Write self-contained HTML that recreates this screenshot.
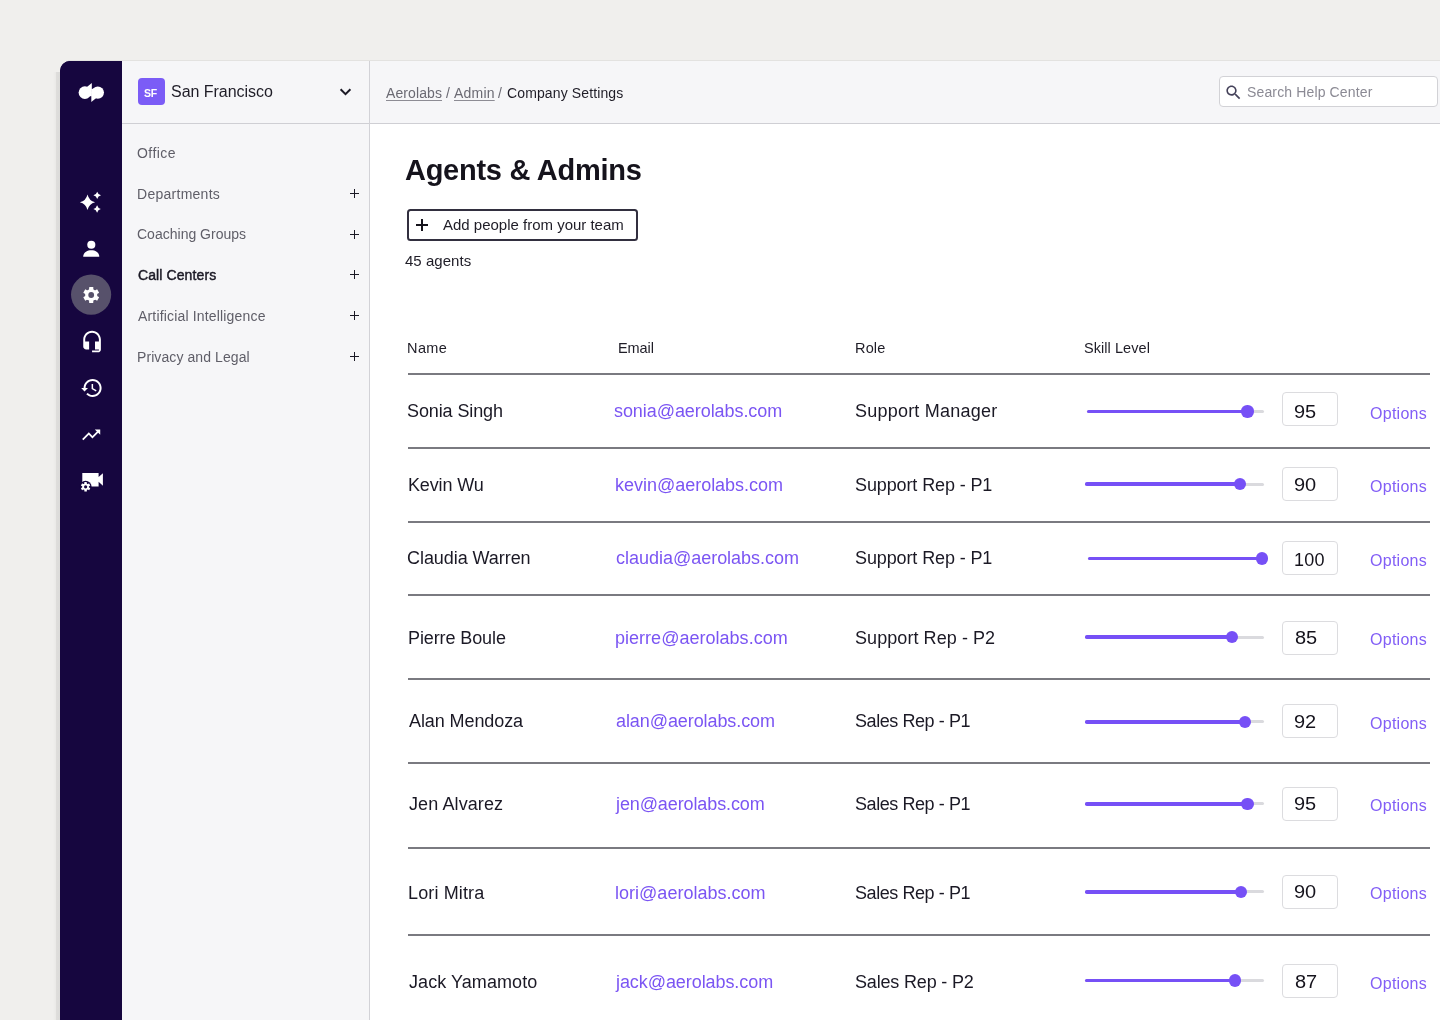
<!DOCTYPE html>
<html><head><meta charset="utf-8">
<style>
*{margin:0;padding:0;box-sizing:border-box}
html,body{width:1440px;height:1020px;overflow:hidden}
body{background:#f0efed;font-family:"Liberation Sans",sans-serif;position:relative;color:#1b1925}
.abs{position:absolute}
.t{position:absolute;white-space:nowrap;line-height:1;will-change:transform}
u{text-decoration:underline;text-underline-offset:2px;text-decoration-thickness:1px;text-decoration-color:#8d8c94}
#app{position:absolute;left:60px;top:61px;width:1380px;height:959px;border-top-left-radius:10px;background:#16063f;}
#rail{position:absolute;left:60px;top:61px;width:62px;height:959px;background:#16063f;border-top-left-radius:10px}
#sub{position:absolute;left:122px;top:61px;width:248px;height:959px;background:#f6f6f8}
#vdiv{position:absolute;left:369px;top:61px;width:1px;height:959px;background:#d2d2d7}
#shadow{position:absolute;left:53px;top:72px;width:7px;height:948px;background:linear-gradient(to right,rgba(0,0,0,0),rgba(0,0,0,.025) 40%,rgba(0,0,0,.075) 45%,rgba(0,0,0,.085))}
#topsh{position:absolute;left:68px;top:60px;width:1372px;height:1px;background:rgba(0,0,0,.05)}
#hdr{position:absolute;left:122px;top:61px;width:1318px;height:63px;background:#f6f6f8;border-bottom:1px solid #cfcfd4}
#main{position:absolute;left:370px;top:124px;width:1070px;height:896px;background:#fff}
.plus{position:absolute;width:9px;height:9px}
.plus:before{content:"";position:absolute;left:0;top:3.7px;width:9px;height:1.6px;background:#1b1925}
.plus:after{content:"";position:absolute;left:3.7px;top:0;width:1.6px;height:9px;background:#1b1925}
.line{position:absolute;left:408px;width:1022px;height:2px;background:#7a7a80}
</style></head><body>
<div id="app"></div><div id="rail"></div><div id="sub"></div><div id="hdr"></div><div id="main"></div><div id="vdiv"></div><div id="shadow"></div><div id="topsh"></div>
<svg class="abs" style="left:0;top:0" width="1440" height="1020" viewBox="0 0 1440 1020"><g fill="#fff"><circle cx="84.9" cy="92.6" r="6.3"/><path d="M86.6 87.2 L91.8 82.9 L91.8 96.2 L85 96Z"/><circle cx="97.8" cy="92.6" r="6.2"/><path d="M96.2 98 L91.3 101.9 L91.3 89 L97 89Z"/></g><g fill="#fff"><path d="M87.5 194.39999999999998 Q89.0 200.7 95.1 202.2 Q89.0 203.7 87.5 210.0 Q86.0 203.7 79.9 202.2 Q86.0 200.7 87.5 194.39999999999998Z"/><path d="M97.2 191.65 Q98.0 194.54999999999998 101.0 195.35 Q98.0 196.15 97.2 199.04999999999998 Q96.4 196.15 93.4 195.35 Q96.4 194.54999999999998 97.2 191.65Z"/><path d="M97.1 205.15 Q97.89999999999999 208.1 100.8 208.9 Q97.89999999999999 209.70000000000002 97.1 212.65 Q96.3 209.70000000000002 93.39999999999999 208.9 Q96.3 208.1 97.1 205.15Z"/></g><g fill="#fff"><circle cx="91.3" cy="244.8" r="4.05"/><path d="M83.2 256.8 C83.2 252.2 87.2 250.2 91.3 250.2 C95.4 250.2 99.3 252.2 99.3 256.8Z"/></g><circle cx="91.1" cy="294.6" r="20.1" fill="#57516b"/><g transform="translate(91.2,295)" fill="#fff"><circle r="6.1"/><rect x="-2.1" y="-8" width="4.2" height="16" rx="0.4" transform="rotate(0)"/><rect x="-2.1" y="-8" width="4.2" height="16" rx="0.4" transform="rotate(60)"/><rect x="-2.1" y="-8" width="4.2" height="16" rx="0.4" transform="rotate(120)"/><circle r="2.9" fill="#57516b"/></g><g transform="translate(80.3,329.6) scale(0.98)" fill="#fff"><path d="M12 1.2c-4.97 0-9 4.03-9 9v7c0 1.66 1.34 3 3 3h3v-8H5v-2c0-3.870 3.13-7 7-7s7 3.13 7 7v2h-4v8h4v1h-7v2h6c1.66 0 3-1.34 3-3V10.2c0-4.97-4.03-9-9-9z"/></g><g transform="translate(79.6,376)" fill="#fff"><path d="M13 3c-4.97 0-9 4.03-9 9H1.6l3.3 3.6L8.4 12H6c0-3.87 3.13-7 7-7s7 3.13 7 7-3.13 7-7 7c-1.93 0-3.68-.79-4.940-2.06l-1.42 1.42C8.27 19.99 10.51 21 13 21c4.97 0 9-4.03 9-9s-4.03-9-9-9zm-1 5v5l4.28 2.54.72-1.21-3.5-2.08V8H12z"/></g><g transform="translate(80.3,424.0) scale(0.906)" fill="#fff"><path d="M16 6l2.29 2.29-4.88 4.88-4-4L2 16.59 3.41 18l6-6 4 4 6.3-6.29L22 12V6z"/></g><path fill="#fff" d="M82.3 473 H98.6 V477 L102.9 473.3 V485.8 L98.6 481.7 V486.6 H82.3Z"/><circle cx="85.6" cy="486.8" r="6.0" fill="#16063f"/><g transform="translate(85.6,486.8)" fill="#fff"><circle r="3.3"/><rect x="-1.25" y="-4.75" width="2.5" height="9.5" rx="0.4" transform="rotate(0)"/><rect x="-1.25" y="-4.75" width="2.5" height="9.5" rx="0.4" transform="rotate(60)"/><rect x="-1.25" y="-4.75" width="2.5" height="9.5" rx="0.4" transform="rotate(120)"/><circle r="1.6" fill="#16063f"/></g></svg>
<div class="abs" style="left:138px;top:78px;width:27px;height:27px;border-radius:4px;background:#7b5cf6"></div>
<div class="t" style="left:144.11px;top:87.71px;font-size:10.5px;color:#fff;font-weight:bold;letter-spacing:-0.200px;">SF</div>
<div class="t" style="left:170.58px;top:83.96px;font-size:16px;color:#1f1d27;font-weight:normal;letter-spacing:-0.035px;">San Francisco</div>
<svg class="abs" style="left:330px;top:80px" width="30" height="25" viewBox="330 80 30 25"><polyline points="340.6,89.3 345.5,94.2 350.4,89.3" fill="none" stroke="#1b1925" stroke-width="2"/></svg>
<div class="t" style="left:137.49px;top:145.95px;font-size:14px;color:#5f5e68;font-weight:normal;letter-spacing:0.458px;">Office</div>
<div class="t" style="left:137.02px;top:186.65px;font-size:14px;color:#5f5e68;font-weight:normal;letter-spacing:0.269px;">Departments</div>
<div class="plus" style="left:350px;top:189px"></div>
<div class="t" style="left:137.44px;top:227.35px;font-size:14px;color:#5f5e68;font-weight:normal;letter-spacing:0.008px;">Coaching Groups</div>
<div class="plus" style="left:350px;top:230px"></div>
<div class="t" style="left:137.84px;top:267.85px;font-size:14px;color:#1b1925;font-weight:normal;letter-spacing:0.101px;-webkit-text-stroke:0.45px #1b1925;">Call Centers</div>
<div class="plus" style="left:350px;top:270px"></div>
<div class="t" style="left:137.95px;top:309.05px;font-size:14px;color:#5f5e68;font-weight:normal;letter-spacing:0.169px;">Artificial Intelligence</div>
<div class="plus" style="left:350px;top:311px"></div>
<div class="t" style="left:137.02px;top:349.55px;font-size:14px;color:#5f5e68;font-weight:normal;letter-spacing:0.085px;">Privacy and Legal</div>
<div class="plus" style="left:350px;top:352px"></div>
<div class="t" style="left:385.55px;top:86.05px;font-size:14px;color:#6b6a73;font-weight:normal;letter-spacing:0.094px;"><u>Aerolabs</u></div>
<div class="t" style="left:446.35px;top:86.05px;font-size:14px;color:#6b6a73;font-weight:normal;letter-spacing:0.000px;">/</div>
<div class="t" style="left:454.15px;top:86.05px;font-size:14px;color:#6b6a73;font-weight:normal;letter-spacing:0.199px;"><u>Admin</u></div>
<div class="t" style="left:498.15px;top:86.05px;font-size:14px;color:#6b6a73;font-weight:normal;letter-spacing:0.000px;">/</div>
<div class="t" style="left:506.54px;top:86.05px;font-size:14px;color:#1f1d27;font-weight:normal;letter-spacing:0.121px;">Company Settings</div>
<div class="abs" style="left:1219px;top:76px;width:219px;height:31px;border:1px solid #d2d2d6;border-radius:4px;background:#fff"></div>
<svg class="abs" style="left:1224.3px;top:82.5px" width="19" height="19" viewBox="0 0 24 24" fill="#45425a"><path d="M15.5 14h-.79l-.28-.27C15.41 12.59 16 11.11 16 9.5 16 5.910 13.09 3 9.5 3S3 5.91 3 9.5 5.91 16 9.5 16c1.61 0 3.09-.59 4.23-1.57l.27.28v.79l5 4.99L20.49 19l-4.99-5zm-6 0C7.01 14 5 11.99 5 9.5S7.01 5 9.5 5 14 7.01 14 9.5 11.99 14 9.5 14z"/></svg>
<div class="t" style="left:1246.63px;top:84.95px;font-size:14px;color:#8b8a94;font-weight:normal;letter-spacing:0.141px;">Search Help Center</div>
<div class="t" style="left:404.91px;top:155.65px;font-size:29px;color:#15131c;font-weight:bold;letter-spacing:-0.269px;">Agents &amp; Admins</div>
<div class="abs" style="left:407px;top:209px;width:231px;height:32px;border:2px solid #322f3f;border-radius:3.5px;background:#fff"></div>
<div class="abs" style="left:416px;top:224px;width:12.3px;height:2px;background:#15131c"></div>
<div class="abs" style="left:421.1px;top:218.9px;width:2px;height:12.2px;background:#15131c"></div>
<div class="t" style="left:443.44px;top:217.10px;font-size:15px;color:#1f1d27;font-weight:normal;letter-spacing:-0.006px;">Add people from your team</div>
<div class="t" style="left:405.14px;top:252.80px;font-size:15px;color:#1f1d27;font-weight:normal;letter-spacing:0.032px;">45 agents</div>
<div class="t" style="left:406.69px;top:341.23px;font-size:14.5px;color:#1f1d27;font-weight:normal;letter-spacing:0.416px;">Name</div>
<div class="t" style="left:618.19px;top:341.23px;font-size:14.5px;color:#1f1d27;font-weight:normal;letter-spacing:-0.085px;">Email</div>
<div class="t" style="left:855.09px;top:341.23px;font-size:14.5px;color:#1f1d27;font-weight:normal;letter-spacing:0.159px;">Role</div>
<div class="t" style="left:1084.42px;top:341.23px;font-size:14.5px;color:#1f1d27;font-weight:normal;letter-spacing:0.063px;">Skill Level</div>
<div class="line" style="top:373px"></div>
<div class="line" style="top:447px"></div>
<div class="line" style="top:521px"></div>
<div class="line" style="top:594px"></div>
<div class="line" style="top:678px"></div>
<div class="line" style="top:762px"></div>
<div class="line" style="top:847px"></div>
<div class="line" style="top:934px"></div>
<div class="t" style="left:406.76px;top:402.46px;font-size:18px;color:#1b1925;font-weight:normal;letter-spacing:-0.109px;">Sonia Singh</div>
<div class="t" style="left:614.41px;top:402.46px;font-size:18px;color:#7b55f3;font-weight:normal;letter-spacing:-0.069px;">sonia@aerolabs.com</div>
<div class="t" style="left:855.26px;top:402.46px;font-size:18px;color:#1b1925;font-weight:normal;letter-spacing:0.218px;">Support Manager</div>
<div class="abs" style="left:1087.2px;top:410.0px;width:176.6px;height:3px;border-radius:1.5px;background:#dadade"></div>
<div class="abs" style="left:1087.2px;top:409.75px;width:160.4px;height:3.5px;border-radius:1.75px;background:#7650f6"></div>
<div class="abs" style="left:1241.4px;top:405.3px;width:12.4px;height:12.4px;border-radius:50%;background:#7650f6"></div>
<div class="abs" style="left:1282px;top:392.3px;width:56px;height:34px;border:1px solid #dcdcdf;border-radius:4px;background:#fff"></div>
<div class="t" style="left:1294.48px;top:403.36px;font-size:18px;color:#15131c;font-weight:normal;letter-spacing:0.000px;transform:scaleX(1.11);transform-origin:0 0;">95</div>
<div class="t" style="left:1370.19px;top:405.76px;font-size:16px;color:#825ef6;font-weight:normal;letter-spacing:0.266px;">Options</div>
<div class="t" style="left:408.21px;top:475.66px;font-size:18px;color:#1b1925;font-weight:normal;letter-spacing:-0.132px;">Kevin Wu</div>
<div class="t" style="left:615.46px;top:475.66px;font-size:18px;color:#7b55f3;font-weight:normal;letter-spacing:-0.019px;">kevin@aerolabs.com</div>
<div class="t" style="left:855.26px;top:475.66px;font-size:18px;color:#1b1925;font-weight:normal;letter-spacing:-0.113px;">Support Rep - P1</div>
<div class="abs" style="left:1085.3px;top:482.5px;width:178.5px;height:3px;border-radius:1.5px;background:#dadade"></div>
<div class="abs" style="left:1085.3px;top:482.25px;width:154.4px;height:3.5px;border-radius:1.75px;background:#7650f6"></div>
<div class="abs" style="left:1233.5px;top:477.8px;width:12.4px;height:12.4px;border-radius:50%;background:#7650f6"></div>
<div class="abs" style="left:1282px;top:467.3px;width:56px;height:34px;border:1px solid #dcdcdf;border-radius:4px;background:#fff"></div>
<div class="t" style="left:1294.48px;top:475.66px;font-size:18px;color:#15131c;font-weight:normal;letter-spacing:0.000px;transform:scaleX(1.11);transform-origin:0 0;">90</div>
<div class="t" style="left:1370.19px;top:479.26px;font-size:16px;color:#825ef6;font-weight:normal;letter-spacing:0.266px;">Options</div>
<div class="t" style="left:406.85px;top:549.16px;font-size:18px;color:#1b1925;font-weight:normal;letter-spacing:-0.058px;">Claudia Warren</div>
<div class="t" style="left:615.68px;top:549.16px;font-size:18px;color:#7b55f3;font-weight:normal;letter-spacing:-0.018px;">claudia@aerolabs.com</div>
<div class="t" style="left:855.26px;top:549.16px;font-size:18px;color:#1b1925;font-weight:normal;letter-spacing:-0.113px;">Support Rep - P1</div>
<div class="abs" style="left:1087.6px;top:557.0px;width:176.2px;height:3px;border-radius:1.5px;background:#dadade"></div>
<div class="abs" style="left:1087.6px;top:556.75px;width:174.1px;height:3.5px;border-radius:1.75px;background:#7650f6"></div>
<div class="abs" style="left:1255.5px;top:552.3px;width:12.4px;height:12.4px;border-radius:50%;background:#7650f6"></div>
<div class="abs" style="left:1282px;top:541.3px;width:56px;height:34px;border:1px solid #dcdcdf;border-radius:4px;background:#fff"></div>
<div class="t" style="left:1294.01px;top:550.66px;font-size:18px;color:#15131c;font-weight:normal;letter-spacing:0.203px;">100</div>
<div class="t" style="left:1370.19px;top:553.06px;font-size:16px;color:#825ef6;font-weight:normal;letter-spacing:0.266px;">Options</div>
<div class="t" style="left:408.31px;top:628.86px;font-size:18px;color:#1b1925;font-weight:normal;letter-spacing:-0.106px;">Pierre Boule</div>
<div class="t" style="left:615.28px;top:628.86px;font-size:18px;color:#7b55f3;font-weight:normal;letter-spacing:0.020px;">pierre@aerolabs.com</div>
<div class="t" style="left:855.26px;top:628.86px;font-size:18px;color:#1b1925;font-weight:normal;letter-spacing:0.068px;">Support Rep - P2</div>
<div class="abs" style="left:1085.3px;top:635.7px;width:178.5px;height:3px;border-radius:1.5px;background:#dadade"></div>
<div class="abs" style="left:1085.3px;top:635.45px;width:146.8px;height:3.5px;border-radius:1.75px;background:#7650f6"></div>
<div class="abs" style="left:1225.9px;top:631.0px;width:12.4px;height:12.4px;border-radius:50%;background:#7650f6"></div>
<div class="abs" style="left:1282px;top:620.5px;width:56px;height:34px;border:1px solid #dcdcdf;border-radius:4px;background:#fff"></div>
<div class="t" style="left:1294.55px;top:628.66px;font-size:18px;color:#15131c;font-weight:normal;letter-spacing:0.000px;transform:scaleX(1.11);transform-origin:0 0;">85</div>
<div class="t" style="left:1370.19px;top:632.16px;font-size:16px;color:#825ef6;font-weight:normal;letter-spacing:0.266px;">Options</div>
<div class="t" style="left:409.15px;top:711.96px;font-size:18px;color:#1b1925;font-weight:normal;letter-spacing:-0.088px;">Alan Mendoza</div>
<div class="t" style="left:615.68px;top:711.96px;font-size:18px;color:#7b55f3;font-weight:normal;letter-spacing:-0.084px;">alan@aerolabs.com</div>
<div class="t" style="left:855.26px;top:711.96px;font-size:18px;color:#1b1925;font-weight:normal;letter-spacing:-0.430px;">Sales Rep - P1</div>
<div class="abs" style="left:1085.3px;top:720.4px;width:178.5px;height:3px;border-radius:1.5px;background:#dadade"></div>
<div class="abs" style="left:1085.3px;top:720.15px;width:159.6px;height:3.5px;border-radius:1.75px;background:#7650f6"></div>
<div class="abs" style="left:1238.7px;top:715.7px;width:12.4px;height:12.4px;border-radius:50%;background:#7650f6"></div>
<div class="abs" style="left:1282px;top:703.7px;width:56px;height:34px;border:1px solid #dcdcdf;border-radius:4px;background:#fff"></div>
<div class="t" style="left:1294.48px;top:713.26px;font-size:18px;color:#15131c;font-weight:normal;letter-spacing:0.000px;transform:scaleX(1.11);transform-origin:0 0;">92</div>
<div class="t" style="left:1370.19px;top:715.66px;font-size:16px;color:#825ef6;font-weight:normal;letter-spacing:0.266px;">Options</div>
<div class="t" style="left:408.88px;top:795.36px;font-size:18px;color:#1b1925;font-weight:normal;letter-spacing:0.101px;">Jen Alvarez</div>
<div class="t" style="left:616.43px;top:795.36px;font-size:18px;color:#7b55f3;font-weight:normal;letter-spacing:-0.106px;">jen@aerolabs.com</div>
<div class="t" style="left:855.26px;top:795.36px;font-size:18px;color:#1b1925;font-weight:normal;letter-spacing:-0.430px;">Sales Rep - P1</div>
<div class="abs" style="left:1085.3px;top:802.3px;width:178.5px;height:3px;border-radius:1.5px;background:#dadade"></div>
<div class="abs" style="left:1085.3px;top:802.05px;width:162.1px;height:3.5px;border-radius:1.75px;background:#7650f6"></div>
<div class="abs" style="left:1241.2px;top:797.6px;width:12.4px;height:12.4px;border-radius:50%;background:#7650f6"></div>
<div class="abs" style="left:1282px;top:787.0px;width:56px;height:34px;border:1px solid #dcdcdf;border-radius:4px;background:#fff"></div>
<div class="t" style="left:1294.48px;top:795.36px;font-size:18px;color:#15131c;font-weight:normal;letter-spacing:0.000px;transform:scaleX(1.11);transform-origin:0 0;">95</div>
<div class="t" style="left:1370.19px;top:798.26px;font-size:16px;color:#825ef6;font-weight:normal;letter-spacing:0.266px;">Options</div>
<div class="t" style="left:408.31px;top:884.46px;font-size:18px;color:#1b1925;font-weight:normal;letter-spacing:0.131px;">Lori Mitra</div>
<div class="t" style="left:615.26px;top:884.46px;font-size:18px;color:#7b55f3;font-weight:normal;letter-spacing:0.018px;">lori@aerolabs.com</div>
<div class="t" style="left:855.26px;top:884.46px;font-size:18px;color:#1b1925;font-weight:normal;letter-spacing:-0.430px;">Sales Rep - P1</div>
<div class="abs" style="left:1085.3px;top:890.3px;width:178.5px;height:3px;border-radius:1.5px;background:#dadade"></div>
<div class="abs" style="left:1085.3px;top:890.05px;width:155.8px;height:3.5px;border-radius:1.75px;background:#7650f6"></div>
<div class="abs" style="left:1234.9px;top:885.6px;width:12.4px;height:12.4px;border-radius:50%;background:#7650f6"></div>
<div class="abs" style="left:1282px;top:874.7px;width:56px;height:34px;border:1px solid #dcdcdf;border-radius:4px;background:#fff"></div>
<div class="t" style="left:1294.48px;top:883.36px;font-size:18px;color:#15131c;font-weight:normal;letter-spacing:0.000px;transform:scaleX(1.11);transform-origin:0 0;">90</div>
<div class="t" style="left:1370.19px;top:886.06px;font-size:16px;color:#825ef6;font-weight:normal;letter-spacing:0.266px;">Options</div>
<div class="t" style="left:408.88px;top:973.46px;font-size:18px;color:#1b1925;font-weight:normal;letter-spacing:0.071px;">Jack Yamamoto</div>
<div class="t" style="left:616.43px;top:973.46px;font-size:18px;color:#7b55f3;font-weight:normal;letter-spacing:-0.075px;">jack@aerolabs.com</div>
<div class="t" style="left:855.26px;top:973.46px;font-size:18px;color:#1b1925;font-weight:normal;letter-spacing:-0.175px;">Sales Rep - P2</div>
<div class="abs" style="left:1085.3px;top:979.1px;width:178.5px;height:3px;border-radius:1.5px;background:#dadade"></div>
<div class="abs" style="left:1085.3px;top:978.85px;width:149.6px;height:3.5px;border-radius:1.75px;background:#7650f6"></div>
<div class="abs" style="left:1228.7px;top:974.4px;width:12.4px;height:12.4px;border-radius:50%;background:#7650f6"></div>
<div class="abs" style="left:1282px;top:963.9px;width:56px;height:34px;border:1px solid #dcdcdf;border-radius:4px;background:#fff"></div>
<div class="t" style="left:1294.55px;top:973.16px;font-size:18px;color:#15131c;font-weight:normal;letter-spacing:0.000px;transform:scaleX(1.11);transform-origin:0 0;">87</div>
<div class="t" style="left:1370.19px;top:975.56px;font-size:16px;color:#825ef6;font-weight:normal;letter-spacing:0.266px;">Options</div>
</body></html>
